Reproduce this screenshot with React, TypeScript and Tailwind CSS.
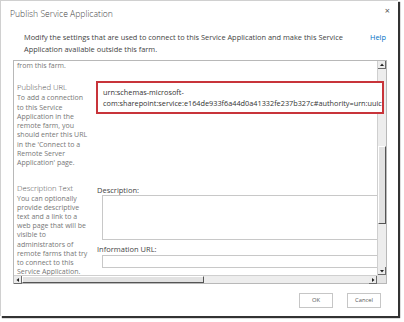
import React from "react";

const urlHelp = [
  "To add a connection",
  "to this Service",
  "Application in the",
  "remote farm, you",
  "should enter this URL",
  "in the 'Connect to a",
  "Remote Server",
  "Application' page.",
];

const descHelp = [
  "You can optionally",
  "provide descriptive",
  "text and a link to a",
  "web page that will be",
  "visible to",
  "administrators of",
  "remote farms that try",
  "to connect to this",
  "Service Application.",
];

// tiny triangle used on the classic scrollbar buttons
const Tri = ({ dir }: { dir: "up" | "down" | "left" | "right" }) => {
  const pts = {
    up: "1,4 3,1.5 5,4",
    down: "1,2 3,4.5 5,2",
    left: "4,1 1.5,3 4,5",
    right: "2,1 4.5,3 2,5",
  }[dir];
  return (
    <svg width="6" height="6" viewBox="0 0 6 6">
      <polygon points={pts} fill="#222" />
    </svg>
  );
};

const ScrollButton = ({ dir }: { dir: "up" | "down" | "left" | "right" }) => (
  <div className="flex h-[8px] w-[8px] items-center justify-center border-b border-r border-[#6b6b6b] bg-[#ececec]">
    <Tri dir={dir} />
  </div>
);

const App = () => {
  return (
    <div className="h-[322px] w-[404px] overflow-hidden bg-white font-['Open_Sans',sans-serif]">
      <div className="relative flex h-[316px] w-[398px] flex-col border-l border-t border-[#d0d0d0] bg-white shadow-[2px_2px_1px_rgba(0,0,0,0.8)]">
        {/* title bar */}
        <div className="flex h-[26px] items-start justify-between pl-[9px] pr-[8px] pt-[7px]">
          <span className="text-[8.6px] font-light leading-[12px] text-[#444]">
            Publish Service Application
          </span>
          <span className="mt-[-3px] text-[9px] leading-[12px] text-[#555]">×</span>
        </div>

        {/* intro */}
        <div className="mt-[4px] flex pl-[23px] pr-[12px]">
          <p className="whitespace-nowrap text-[7.4px] leading-[12px] text-[#444]">
            Modify the settings that are used to connect to this Service Application and make this Service
            <br />
            Application available outside this farm.
          </p>
          <span className="ml-auto text-[7.4px] leading-[12px] text-[#0072c6]">Help</span>
        </div>

        {/* scrolling form panel */}
        <div className="ml-[12px] mt-[5px] grid h-[224px] w-[374px] grid-cols-[1fr_9px] grid-rows-[1fr_8px] border border-[#b8b8b8]">
          <div className="overflow-hidden whitespace-nowrap">
            <div className="pl-[3px] text-[7px] leading-[9.3px] text-[#777]">from this farm.</div>

            <div className="mt-[12px] grid grid-cols-[83px_1fr]">
              <div className="pl-[3px]">
                <div className="text-[7.7px] font-light leading-[11px] text-[#555]">Published URL</div>
                <div className="text-[7px] leading-[9.3px] text-[#777]">
                  {urlHelp.map((l) => (
                    <div key={l}>{l}</div>
                  ))}
                </div>
              </div>
              <div />
            </div>

            <div className="mt-[15px] grid grid-cols-[83px_1fr]">
              <div className="pl-[3px]">
                <div className="text-[7.7px] font-light leading-[11px] text-[#555]">Description Text</div>
                <div className="text-[7px] leading-[9.2px] text-[#777]">
                  {descHelp.map((l) => (
                    <div key={l}>{l}</div>
                  ))}
                </div>
              </div>
              <div className="pt-[2px]">
                <div className="text-[7.5px] leading-[10px] text-[#444]">Description:</div>
                <div className="ml-[5px] h-[45px] w-[300px] border border-[#c8c8c8] bg-white" />
                <div className="mt-[4px] text-[7.5px] leading-[10px] text-[#444]">Information URL:</div>
                <div className="ml-[5px] mt-[1px] h-[13px] w-[300px] border border-[#c8c8c8] bg-white" />
              </div>
            </div>
          </div>

          {/* vertical scrollbar */}
          <div className="flex flex-col border-l border-[#cfcfcf] bg-[#ededed]">
            <ScrollButton dir="up" />
            <div className="h-[77px]" />
            <div className="h-[78px] border border-b-[#555] border-l-[#fff] border-r-[#555] border-t-[#fff] bg-[#e2e2e2]" />
            <div className="flex-1" />
            <ScrollButton dir="down" />
          </div>

          {/* horizontal scrollbar */}
          <div className="flex border-t border-[#cfcfcf] bg-[#ededed]">
            <ScrollButton dir="left" />
            <div className="h-[7px] w-[182px] border border-b-[#555] border-l-[#fff] border-r-[#555] border-t-[#fff] bg-[#e2e2e2]" />
            <div className="flex-1" />
            <ScrollButton dir="right" />
          </div>
          <div className="bg-[#e4e4e4]" />
        </div>

        {/* buttons */}
        <div className="mt-[9px] flex justify-end gap-[14px] pr-[17px]">
          <button className="h-[15px] w-[34px] border border-[#c6c6c6] bg-white text-[5.8px] text-[#555]">OK</button>
          <button className="h-[15px] w-[34px] border border-[#c6c6c6] bg-white text-[5.8px] text-[#555]">Cancel</button>
        </div>

        {/* red annotation box drawn over the URL field and scrollbar */}
        <div className="absolute left-[95px] top-[80px] h-[33px] w-[288px] overflow-hidden border-2 border-[#c8343a] bg-white pl-[5px] pt-[4px] text-[7.3px] leading-[11px] text-[#333]">
          <div>urn:schemas-microsoft-</div>
          <div className="whitespace-nowrap">
            com:sharepoint:service:e164de933f6a44d0a41332fe237b327c#authority=urn:uuic
          </div>
        </div>
      </div>
    </div>
  );
};

export default App;
